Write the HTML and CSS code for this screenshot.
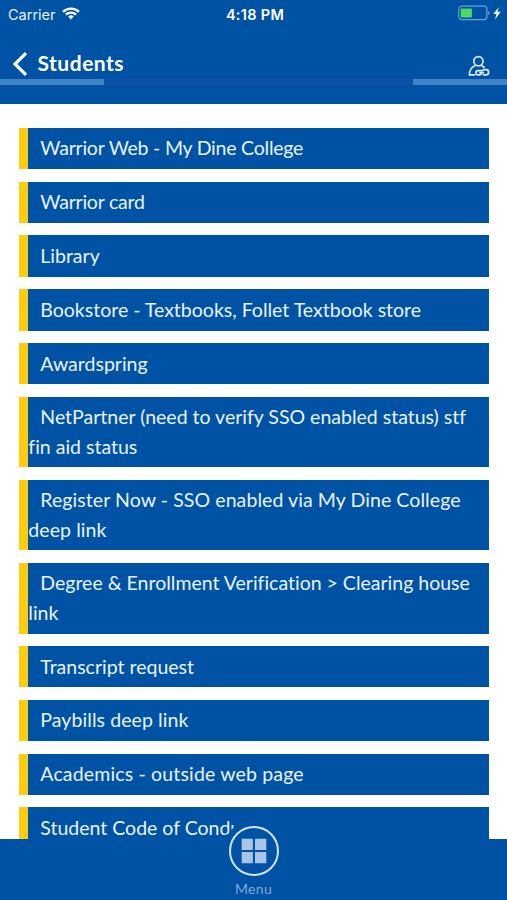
FILE: index.html
```html
<!DOCTYPE html>
<html lang="en">
<head>
  <meta charset="UTF-8" />
  <meta name="viewport" content="width=device-width, initial-scale=1" />
  <title>Students</title>
  <link rel="stylesheet" href="styles.css">
</head>
<body>
  <header>
    <div class="status-bar">
      <div class="carrier">
        <span>Carrier</span>
        <svg class="wifi" viewBox="0 0 18 13" width="18" height="13">
          <path d="M1 4.8a11.5 11.5 0 0 1 16 0M3.9 7.7a7.4 7.4 0 0 1 10.2 0" fill="none" stroke="#fff" stroke-width="2.3"/>
          <path d="M6.2 9.6a4 4 0 0 1 5.6 0L9 12.4z" fill="#fff"/>
        </svg>
      </div>
      <div class="time">4:18 PM</div>
      <svg class="battery" viewBox="0 0 44 16" width="44" height="16">
        <rect x=".7" y="1.2" width="28.2" height="13.4" rx="3" fill="none" stroke="#6d9fd3" stroke-width="1.2"/>
        <rect x="2.7" y="3.4" width="11.2" height="9" rx=".8" fill="#4cd964"/>
        <path d="M30.2 6v4q1.5-.6 1.5-2t-1.5-2z" fill="#6d9fd3"/>
        <path d="M41 2 35.3 8.9h3.2L37 14.4l5.7-7.6h-3.4z" fill="#fff"/>
      </svg>
    </div>

    <div class="nav-bar">
      <svg class="back" viewBox="0 0 16 24" width="16" height="24">
        <path d="M14 1.2 3 12l11 10.8" fill="none" stroke="#fff" stroke-width="3.2"/>
      </svg>
      <h1>Students</h1>
      <svg class="user" viewBox="0 0 22 22" width="22" height="22" fill="none" stroke="#dcebfa" stroke-width="1.7" stroke-linecap="round" stroke-linejoin="round">
        <circle cx="10.4" cy="6.2" r="4.6"/>
        <path d="M6.8 10.8C3.6 12 1.6 14.6 1.3 19.8h5.2M14 10.8l2 1.4"/>
        <path d="M12.8 15.6H10a2.1 2.1 0 0 0 0 4.2h2l1.6-1M12 17.7h3.4M14.4 15.6l1-.9h2.7a2.5 2.5 0 0 1 0 5.1h-2.5"/>
      </svg>
    </div>

    <div class="stripe">
      <div class="stripe-left"></div>
      <div class="stripe-right"></div>
    </div>
  </header>

  <main>
    <a class="link tight">Warrior Web - My Dine College</a>
    <a class="link tight">Warrior card</a>
    <a class="link">Library</a>
    <a class="link">Bookstore - Textbooks, Follet Textbook store</a>
    <a class="link">Awardspring</a>
    <a class="link">NetPartner (need to verify SSO enabled status) stf fin aid status</a>
    <a class="link loose">Register Now - SSO enabled via My Dine College deep link</a>
    <a class="link">Degree &amp; Enrollment Verification &gt; Clearing house link</a>
    <a class="link">Transcript request</a>
    <a class="link loose">Paybills deep link</a>
    <a class="link looser">Academics - outside web page</a>
    <a class="link">Student Code of Conduct</a>
  </main>

  <footer>
    <div class="menu-button">
      <svg viewBox="0 0 26 26" width="26" height="26" fill="#a9c5e6">
        <path d="M.7.7h11.2v11.2H.7zM14 .7h11.3v11.2H14zM.7 14h11.2v11.3H.7zM14 14h11.3v11.3H14z"/>
      </svg>
    </div>
    <div class="menu-label">Menu</div>
  </footer>
</body>
</html>
```

FILE: styles.css
```css
* {
  box-sizing: border-box;
}

body {
  margin: 0;
  height: 900px;
  overflow: hidden;
  display: flex;
  flex-direction: column;
  background-color: white;
  font-family: Lato, "Open Sans", sans-serif;
  font-variant-ligatures: none;
  color: #e8f2fc;
}

header {
  height: 103.5px;
  flex: none;
  background-color: #0053a4;
}

.status-bar {
  height: 28px;
  padding: 0 5px 0 8px;
  display: grid;
  grid-template-columns: 1fr auto 1fr;
  align-items: center;
  font-family: Inter, sans-serif;
  font-size: 14.5px;
}

.carrier {
  display: flex;
  align-items: center;
  gap: 6px;
}

.wifi {
  margin-top: -2px;
}

.time {
  font-weight: 600;
  letter-spacing: 0.3px;
  color: white;
}

.battery {
  justify-self: end;
  margin-top: -2px;
}

.nav-bar {
  height: 51px;
  padding: 0 17px 0 12px;
  display: flex;
  align-items: center;
}

.back {
  margin-top: 21px;
}

h1 {
  margin: 18px 0 0 9.5px;
  flex: 1;
  font-size: 21px;
  font-weight: 700;
  letter-spacing: 0.5px;
  color: white;
}

.user {
  margin-top: 24px;
}

.stripe {
  height: 6px;
  display: flex;
  justify-content: space-between;
  background-color: #104fa8;
}

.stripe-left {
  width: 104px;
  background-color: #4182c6;
}

.stripe-right {
  width: 94px;
  background-color: #4182c6;
}

main {
  flex: 1;
  min-height: 0;
  overflow: hidden;
  padding: 24.3px 18.3px 0 19.3px;
}

.link {
  display: block;
  margin-bottom: 12.4px;
  padding: 5.6px 0 6.5px;
  border-left: 9px solid #ffcb0f;
  background-color: #0053a4;
  font-size: 19.5px;
  line-height: 29.3px;
  text-indent: 12px;
}

.tight {
  letter-spacing: -0.22px;
}

.loose {
  letter-spacing: 0.08px;
}

.looser {
  letter-spacing: 0.16px;
}

footer {
  height: 61px;
  flex: none;
  display: flex;
  flex-direction: column;
  align-items: center;
  background-color: #0053a4;
}

/* the round button sticks out over the list */
.menu-button {
  width: 50px;
  height: 50px;
  flex: none;
  margin-top: -13px;
  display: flex;
  align-items: center;
  justify-content: center;
  position: relative;
  border: 2px solid #d3e4f6;
  border-radius: 50%;
  background-color: #0053a4;
  box-shadow: 0 0 0 6px #0053a4;
}

.menu-label {
  margin-top: 4px;
  font-size: 14px;
  line-height: 18px;
  letter-spacing: 0.3px;
  color: #7fa9d6;
}
```
